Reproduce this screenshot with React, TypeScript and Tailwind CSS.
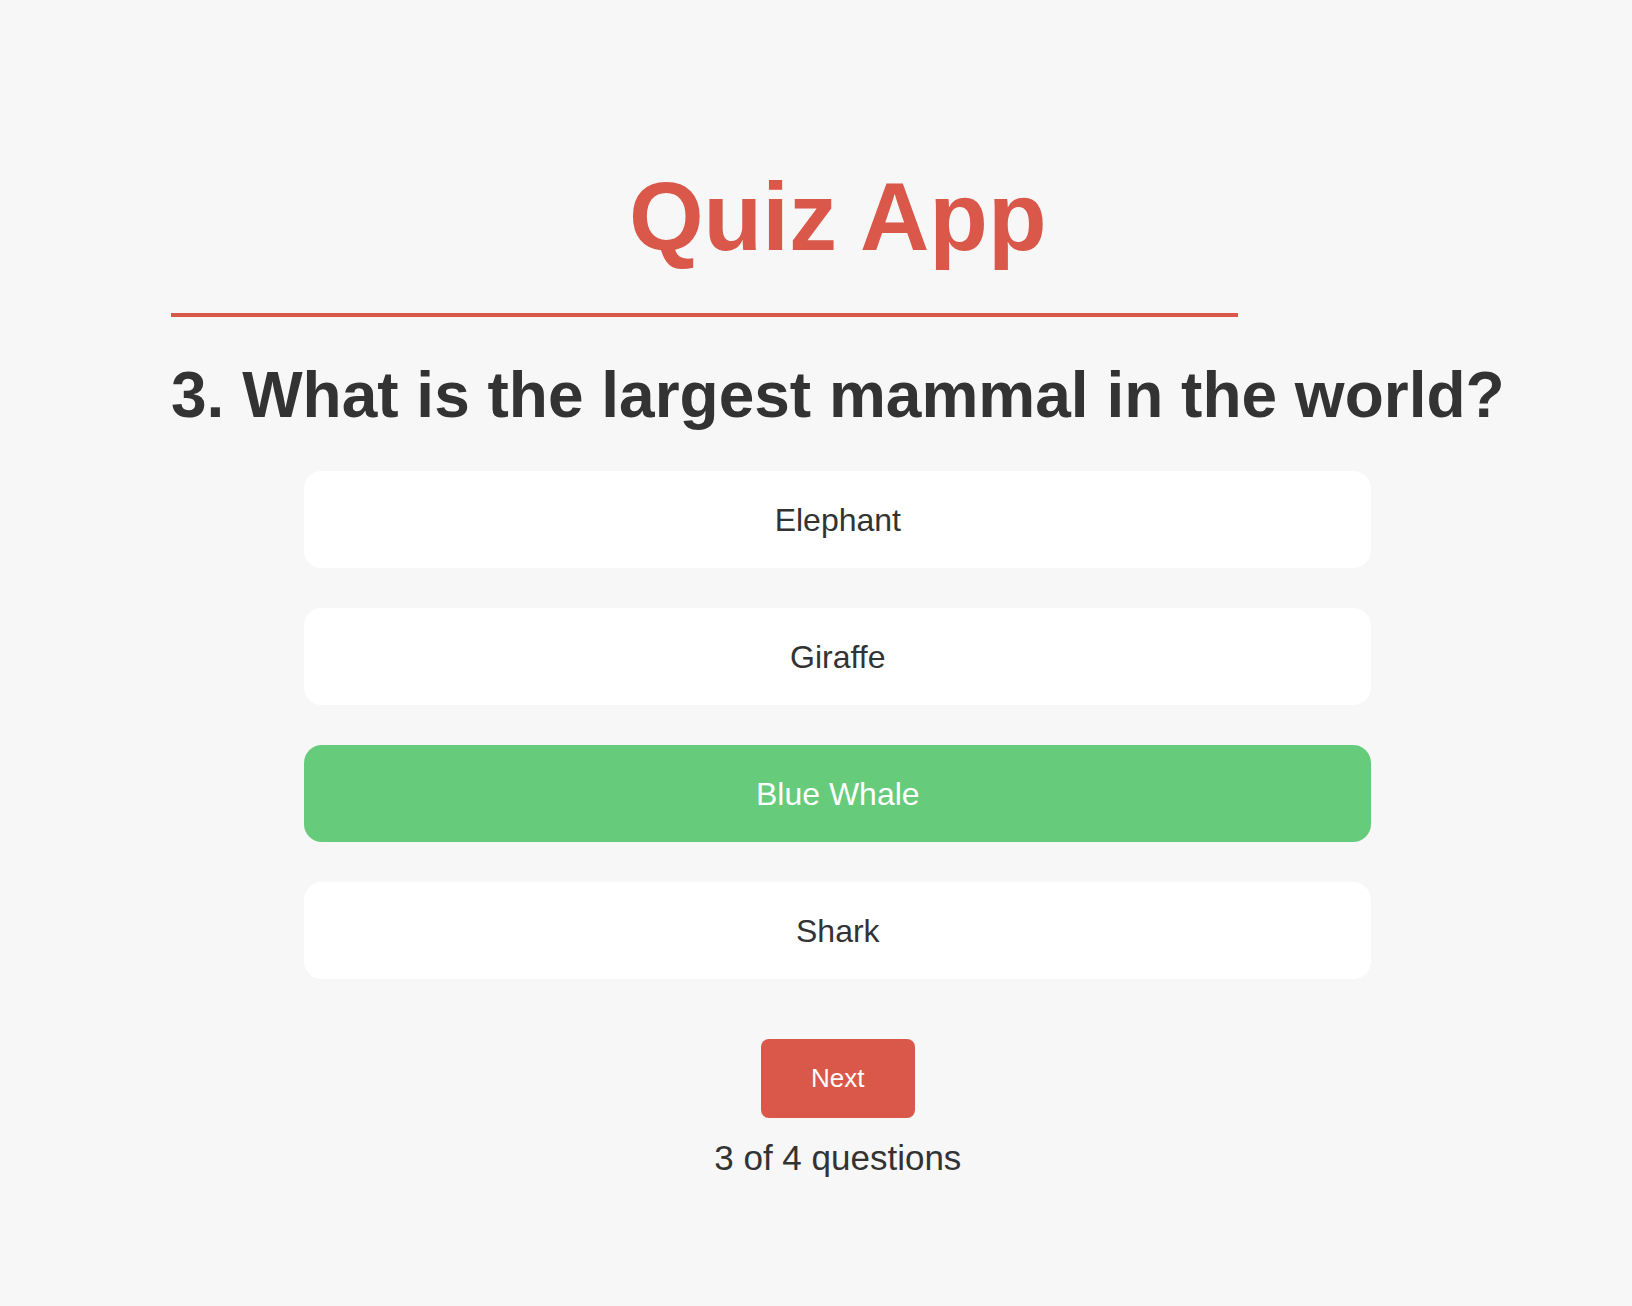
import React from "react";

const options = ["Elephant", "Giraffe", "Blue Whale", "Shark"];

export default function App() {
  const selected = 2;
  return (
    <div className="min-h-[1306px] bg-[#f7f7f7] font-['Liberation_Sans',Arial,sans-serif] text-[#333333]">
      <div className="ml-[171px] flex w-fit flex-col pt-[169px]">
        <h1 className="text-center text-[96px] font-bold leading-[96px] text-[#d9584a]">Quiz App</h1>
        <div className="mt-[48px] h-[4px] w-[80%] bg-[#d9584a]" />
        <h2 className="mt-[46px] whitespace-nowrap text-center text-[64px] font-bold leading-[64px]">
          3. What is the largest mammal in the world?
        </h2>
        <div className="mx-auto mt-[44px] flex w-[80%] flex-col gap-[40px]">
          {options.map((o, i) => (
            <div
              key={o}
              className={
                i === selected
                  ? "flex h-[97px] items-center justify-center rounded-[18px] bg-[#66cb7b] text-[32px] text-white"
                  : "flex h-[97px] items-center justify-center rounded-[18px] bg-white text-[32px] text-[#333333]"
              }
            >
              {o}
            </div>
          ))}
        </div>
        <button className="mx-auto mt-[60px] flex h-[79px] w-[154px] items-center justify-center rounded-[8px] bg-[#d9584a] text-[26px] text-white">
          Next
        </button>
        <p className="mt-[22px] text-center text-[35px] leading-[35px]">3 of 4 questions</p>
      </div>
    </div>
  );
}
